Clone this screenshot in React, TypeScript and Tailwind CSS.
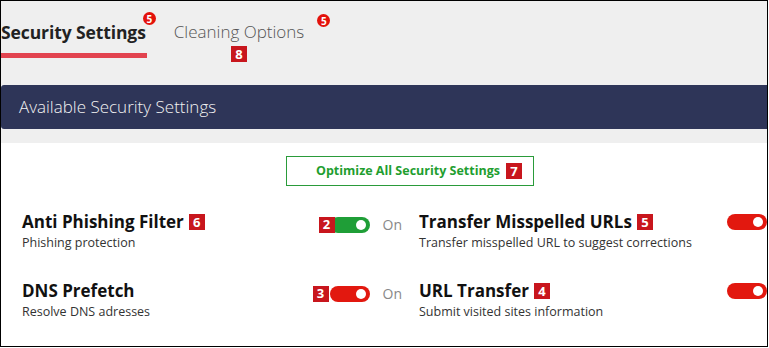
const font = { fontFamily: '"Open Sans", "Noto Sans", sans-serif' };

const Tag = ({ n, className = '' }: { n: number; className?: string }) => (
  <span
    className={`inline-flex h-4 w-4 items-center justify-center bg-[#c8161d] text-[13px] font-bold leading-none text-white ${className}`}
  >
    {n}
  </span>
);

const Dot = ({ n, className = '' }: { n: number; className?: string }) => (
  <span
    className={`inline-flex h-[13px] w-[13px] items-center justify-center rounded-full bg-[#e3120b] text-[10px] font-bold leading-none text-white ${className}`}
  >
    {n}
  </span>
);

const Toggle = ({ green = false }: { green?: boolean }) => (
  <span
    className={`flex h-4 w-10 shrink-0 items-center justify-end rounded-full pr-[4px] ${
      green ? 'bg-[#1f9e37]' : 'bg-[#e2180f]'
    }`}
  >
    <span className="h-[10px] w-[10px] rounded-full bg-white" />
  </span>
);

const Setting = ({
  title,
  desc,
  tag,
}: {
  title: string;
  desc: string;
  tag?: number;
}) => (
  <div className="flex flex-col">
    <div className="flex items-center gap-[5px]">
      <span className="text-[17px] font-bold leading-[22px] text-[#111]">{title}</span>
      {tag !== undefined && <Tag n={tag} />}
    </div>
    <span className="mt-[2px] text-[12.5px] leading-4 text-[#333]">{desc}</span>
  </div>
);

export default function App() {
  return (
    <div
      className="h-[347px] w-[768px] overflow-hidden border border-black bg-white"
      style={font}
    >
      <div className="flex h-[84px] items-start gap-[18px] bg-[#efefef]">
        <div className="flex flex-col">
          <div className="flex items-start pt-[11px]">
            <span className="mt-[9px] text-[17.5px] font-bold leading-[22px] tracking-[-0.1px] text-[#222]">
              Security Settings
            </span>
            <Dot n={5} className="-ml-[3px]" />
          </div>
          <div className="mt-[10px] h-[5px] w-[146px] bg-[#e2434f]" />
        </div>
        <div className="flex items-start pt-[13px]">
          <div className="flex flex-col items-center">
            <span className="mt-[7px] text-[17px] font-light leading-[22px] text-[#555]">
              Cleaning Options
            </span>
            <Tag n={8} className="mt-[3px]" />
          </div>
          <Dot n={5} className="ml-[13px]" />
        </div>
      </div>

      <div className="flex h-[44px] items-center rounded-l-[3px] bg-[#2e3558] pl-[18px] text-[17px] font-light text-[#f2f2f2]">
        Available Security Settings
      </div>
      <div className="h-[14px] bg-[#efefef]" />

      <div className="flex justify-center pt-[13px]">
        <div className="ml-[52px] flex h-[30px] w-[248px] items-center justify-end gap-[6px] border border-[#2a9b3a] pr-[11px] text-[12.5px] font-bold text-[#1f9e2f]">
          Optimize All Security Settings
          <Tag n={7} />
        </div>
      </div>

      <div className="mt-[25px] grid grid-cols-[418px_1fr] gap-y-[29px]">
        <div className="flex items-start pl-[21px] pr-[17px]">
          <Setting title="Anti Phishing Filter" desc="Phishing protection" tag={6} />
          <div className="ml-auto mt-[3px] flex items-center">
            <Tag n={2} className="relative z-10 -mr-[5px]" />
            <Toggle green />
            <span className="ml-[13px] text-[14px] text-[#888]">On</span>
          </div>
        </div>
        <div className="flex items-start">
          <Setting
            title="Transfer Misspelled URLs"
            desc="Transfer misspelled URL to suggest corrections"
            tag={5}
          />
          <div className="ml-auto mt-[3px] flex items-center">
            <Toggle />
          </div>
        </div>
        <div className="flex items-start pl-[21px] pr-[17px]">
          <Setting title="DNS Prefetch" desc="Resolve DNS adresses" />
          <div className="ml-auto mt-[3px] flex items-center">
            <Tag n={3} className="mr-[1px]" />
            <Toggle />
            <span className="ml-[13px] text-[14px] text-[#888]">On</span>
          </div>
        </div>
        <div className="flex items-start">
          <Setting
            title="URL Transfer"
            desc="Submit visited sites information"
            tag={4}
          />
          <div className="ml-auto mt-[3px] flex items-center">
            <Toggle />
          </div>
        </div>
      </div>
    </div>
  );
}
